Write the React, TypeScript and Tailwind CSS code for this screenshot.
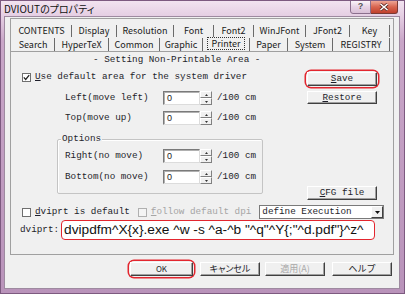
import React from "react";

const mono = "font-['Liberation_Mono',monospace] text-[9.3px] leading-[10px] text-[#1e1e2a]";
const jp = "font-['Noto_Sans_CJK_JP','Noto_Sans',sans-serif]";

function Checkbox({ checked, disabled }: { checked?: boolean; disabled?: boolean }) {
  return (
    <div
      className={
        "w-[9px] h-[9px] shrink-0 border flex items-center justify-center " +
        (disabled ? "border-[#b0b0b0] bg-[#f4f4f4]" : "border-[#6f6f6f] bg-white")
      }
    >
      {checked && (
        <svg width="7" height="7" viewBox="0 0 7 7">
          <path d="M0.8 3.4 L2.7 5.4 L6.2 1.2" stroke="#222" strokeWidth="1.3" fill="none" />
        </svg>
      )}
    </div>
  );
}

function Btn({ children, className = "", disabled }: { children: React.ReactNode; className?: string; disabled?: boolean }) {
  return (
    <div
      className={
        "flex items-center justify-center bg-[#f0f0f0] border border-t-white border-l-white border-b-[#404040] border-r-[#404040] shadow-[inset_-1px_-1px_0_#a0a0a0] " +
        (disabled ? "text-[#a8a8a8] " : "text-[#1e1e2a] ") +
        className
      }
    >
      {children}
    </div>
  );
}

function Spin() {
  const half = "flex-1 flex items-center justify-center bg-[#f0f0f0] border border-t-white border-l-white border-b-[#808080] border-r-[#808080]";
  return (
    <div className="w-[12px] h-[14px] flex flex-col">
      <div className={half}>
        <svg width="3" height="2" viewBox="0 0 3 2"><path d="M1.5 0 L3 2 L0 2Z" fill="#333" /></svg>
      </div>
      <div className={half}>
        <svg width="3" height="2" viewBox="0 0 3 2"><path d="M0 0 L3 0 L1.5 2Z" fill="#333" /></svg>
      </div>
    </div>
  );
}

function NumRow({ label }: { label: string }) {
  return (
    <div className="flex items-center h-[14px]">
      <div className={mono + " w-[98px] whitespace-pre"}>{label}</div>
      <div className="w-[37px] h-[14px] bg-white border border-t-[#7a7a7a] border-l-[#7a7a7a] border-b-[#dcdcdc] border-r-[#dcdcdc] shadow-[inset_1px_1px_0_#b0b0b0] pl-[3px] text-[9px] leading-[12px] font-['Liberation_Sans',sans-serif] text-[#222]">
        0
      </div>
      <Spin />
      <div className={mono + " ml-[5px] whitespace-pre"}>/100 cm</div>
    </div>
  );
}

const row1: [string, number][] = [
  ["CONTENTS", 60],
  ["Display", 45],
  ["Resolution", 57],
  ["Font", 40],
  ["Font2", 40],
  ["WinJFont", 52],
  ["JFont2", 44],
  ["Key", 40],
];
const row2: [string, number][] = [
  ["Search", 43],
  ["HyperTeX", 54],
  ["Common", 51],
  ["Graphic", 43],
  ["Printer", 47],
  ["Paper", 38],
  ["System", 45],
  ["REGISTRY", 57],
];

function TabRow({ items, h }: { items: [string, number][]; h: string }) {
  return (
    <div className={"flex pl-[1px] " + h}>
      {items.map(([t, w]) => (
        <div
          key={t}
          style={{ width: w }}
          className={
            "flex items-center justify-center border-r border-[#6a6a6a] text-[9px] leading-[10px] text-[#1a1a1a] " + jp
          }
        >
          {t === "Printer" ? (
            <span className="border border-dotted border-[#333] px-[4px] h-[13px] -mt-[2px] flex items-center">{t}</span>
          ) : (
            t
          )}
        </div>
      ))}
    </div>
  );
}

export default function App() {
  return (
    <div className="w-[405px] h-[294px] overflow-hidden flex flex-col bg-[linear-gradient(to_bottom,#f2e3f0_0px,#e4cde2_16px,#c9a6c8_40px,#b993ba_294px)] border border-[#7d5a80]">
      {/* title bar */}
      <div className="h-[15px] flex items-start justify-between shrink-0">
        <div className={"pl-[3px] pt-[1px] text-[10px] leading-[13px] text-[#111] [font-feature-settings:'palt'] " + jp}>
          DVIOUTのプロパティ
        </div>
        <div className="flex mr-[6px] -mt-[1px]">
          <div className="w-[21px] h-[14px] flex items-center justify-center rounded-bl-[3px] border border-[#8b6f8d] bg-[linear-gradient(to_bottom,#fbf5fa,#e7d3e5_50%,#d8bfd6)] text-[9px] font-bold text-[#555] font-['Liberation_Sans',sans-serif]">
            ?
          </div>
          <div className="w-[27px] h-[14px] flex items-center justify-center rounded-br-[3px] border border-l-0 border-[#7a3a34] bg-[linear-gradient(to_bottom,#eea595,#d8644f_50%,#c0402c)]">
            <svg width="10" height="8" viewBox="0 0 10 8">
              <path d="M1.5 1 L8.5 7 M8.5 1 L1.5 7" stroke="#5a2520" strokeWidth="3" />
              <path d="M1.5 1 L8.5 7 M8.5 1 L1.5 7" stroke="#fff" strokeWidth="1.6" />
            </svg>
          </div>
        </div>
      </div>

      {/* client */}
      <div className="ml-[3px] mr-[4px] h-[273px] bg-[#f0f0f0] border border-[#9e8aa0] shrink-0 flex flex-col">
        {/* tab control */}
        <div className="ml-[5px] mt-[1px] w-[384px] h-[237px] border border-[#a0a0a0] flex flex-col">
          <div className="pt-[6px] flex flex-col">
            <TabRow items={row1} h="h-[12px]" />
            <div className="h-[1px]" />
            <TabRow items={row2} h="h-[13px]" />
          </div>
          {/* page */}
          <div className="flex-1 border-t border-[#a0a0a0] pl-[11px] flex flex-col">
            <div className="flex">
              {/* left column */}
              <div className="w-[285px] flex flex-col">
                <div className={mono + " mt-[3px] h-[10px] pl-[71px] whitespace-pre"}>- Setting Non-Printable Area -</div>
                <div className="mt-[7px] h-[10px] flex items-center">
                  <Checkbox checked />
                  <div className={mono + " ml-[4px] whitespace-pre"}>
                    <u className="underline-offset-1">U</u>se default area for the system driver
                  </div>
                </div>
                <div className="mt-[9px] pl-[43px]">
                  <NumRow label="Left(move left)" />
                </div>
                <div className="mt-[6px] pl-[43px]">
                  <NumRow label="Top(move up)" />
                </div>
                <div className="mt-[14px] ml-[35px] w-[206px] h-[55px] relative border border-[#c4c4c4] rounded-[2px] shadow-[inset_1px_1px_0_#fff] pl-[7px] pt-[9px] flex flex-col">
                  <div className={mono + " absolute -top-[6px] left-[3px] bg-[#f0f0f0] px-[1px]"}>Options</div>
                  <NumRow label="Right(no move)" />
                  <div className="mt-[7px]">
                    <NumRow label="Bottom(no move)" />
                  </div>
                </div>
              </div>
              {/* right column */}
              <div className="flex flex-col">
                <div className="mt-[20px] rounded-[4px] shadow-[0_0_0_1px_#f0f0f0,0_0_0_2.5px_#e3262f]">
                  <Btn className="w-[70px] h-[14px]">
                    <span className={mono}>
                      <u className="underline-offset-1">S</u>ave
                    </span>
                  </Btn>
                </div>
                <Btn className="mt-[5px] w-[70px] h-[13px]">
                  <span className={mono}>
                    <u className="underline-offset-1">R</u>estore
                  </span>
                </Btn>
                <Btn className="mt-[82px] w-[70px] h-[14px]">
                  <span className={mono + " whitespace-pre"}>
                    <u className="underline-offset-1">C</u>FG file
                  </span>
                </Btn>
              </div>
            </div>

            {/* row F */}
            <div className="mt-[5px] h-[14px] flex items-center">
              <Checkbox />
              <div className={mono + " ml-[4px] whitespace-pre"}>
                <u className="underline-offset-1">d</u>viprt is default
              </div>
              <div className="ml-[8px]">
                <Checkbox disabled />
              </div>
              <div className={mono + " ml-[4px] whitespace-pre text-[#a5a5a5]"}>
                <u className="underline-offset-1">f</u>ollow default dpi
              </div>
              <div className="ml-[8px] w-[125px] h-[14px] bg-white border border-[#7a7a7a] flex items-center">
                <div className={mono + " flex-1 pl-[2px] whitespace-pre"}>define Execution</div>
                <div className="w-[12px] h-[12px] bg-[#f0f0f0] border border-t-white border-l-white border-b-[#404040] border-r-[#404040] flex items-center justify-center">
                  <svg width="5" height="3" viewBox="0 0 5 3"><path d="M0 0 L5 0 L2.5 3Z" fill="#111" /></svg>
                </div>
              </div>
            </div>

            {/* row G */}
            <div className="mt-[1px] h-[20px] flex items-center -ml-[2px]">
              <div className={mono + " whitespace-pre"}>dviprt:</div>
              <div className="ml-[2px] w-[314px] h-[20px] bg-white border-[1.5px] border-[#e3262f] rounded-[4px] flex items-center pl-[2px] overflow-hidden">
                <span className="font-['Liberation_Sans',sans-serif] text-[13.7px] leading-[14px] text-[#111] whitespace-pre">
                  dvipdfm^X{"{x}"}.exe ^w -s ^a-^b "^q"^Y{'{;"^d.pdf"}'}^z^
                </span>
              </div>
            </div>
          </div>
        </div>

        {/* dialog buttons */}
        <div className="mt-[7px] flex justify-end pr-[7px]">
          <div className="rounded-[4px] shadow-[0_0_0_1px_#f0f0f0,0_0_0_2.5px_#e3262f]">
            <Btn className={"w-[63px] h-[14px] text-[8px] " + jp}>OK</Btn>
          </div>
          <Btn className={"ml-[7px] w-[60px] h-[14px] text-[9px] [font-feature-settings:'palt'] " + jp}>キャンセル</Btn>
          <Btn disabled className={"ml-[5px] w-[60px] h-[14px] text-[9px] " + jp}>適用(A)</Btn>
          <Btn className={"ml-[7px] w-[60px] h-[14px] text-[9px] " + jp}>ヘルプ</Btn>
        </div>
      </div>
    </div>
  );
}
